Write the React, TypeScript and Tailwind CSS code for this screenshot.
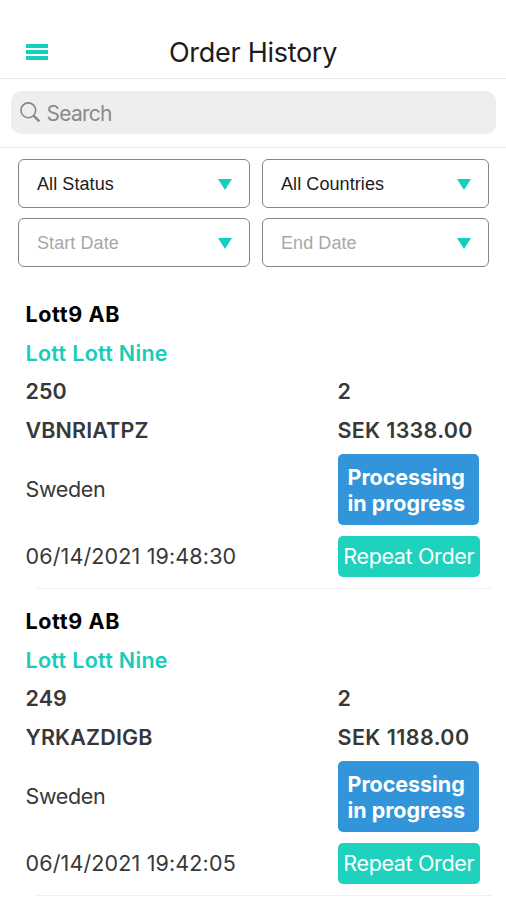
const orders = [
  { id: '250', code: 'VBNRIATPZ', price: 'SEK 1338.00', date: '06/14/2021 19:48:30', priceCls: 'tracking-[0.3px]' },
  { id: '249', code: 'YRKAZDIGB', price: 'SEK 1188.00', date: '06/14/2021 19:42:05', priceCls: 'tracking-[0.42px]' },
];

function Select({ label, muted }: { label: string; muted?: boolean }) {
  return (
    <button
      className={`flex h-[49px] items-center justify-between rounded-[6px] border border-[#858585] bg-white pr-[17px] pl-[18px] font-['Liberation_Sans',Arial,sans-serif] text-[18px] tracking-[0.08px] ${muted ? 'text-[#a8a8a8]' : 'text-[#1c1c1c]'}`}
    >
      <span className="pt-[2px]">{label}</span>
      <svg className="mt-[2px]" width="14" height="11" viewBox="0 0 14 11" fill="#14cfbd">
        <path d="M0 0H14L7 11Z" />
      </svg>
    </button>
  );
}

function Order({ order }: { order: (typeof orders)[number] }) {
  return (
    <section className="h-[307px] pt-[13px] pl-[25.5px] text-[21.5px] text-[#383838]">
      <div className="grid auto-rows-[38.6px] grid-cols-[312px_1fr] items-center font-semibold">
        <div className="col-span-2 font-bold tracking-[0.6px] text-black">Lott9 AB</div>
        <div className="col-span-2 tracking-[0.3px] text-[#17cdb9]">Lott Lott Nine</div>
        <div className="tracking-[0.1px]">{order.id}</div>
        <div>2</div>
        <div className="tracking-[0.12px]">{order.code}</div>
        <div className={order.priceCls}>{order.price}</div>
      </div>
      <div className="mt-[5px] grid grid-cols-[312px_1fr] items-center gap-y-[11px]">
        <div className="pb-[2px] tracking-[-0.35px]">Sweden</div>
        <div className="h-[71px] w-[141px] rounded-[5px] bg-[#3295d9] px-[10px] pt-[10px] leading-[26px] font-bold tracking-[-0.05px] whitespace-nowrap text-white">
          Processing
          <br />
          in progress
        </div>
        <div className="pb-[2px] tracking-[0.14px]">{order.date}</div>
        <button className="h-[41px] w-[142.5px] rounded-[5px] bg-[#1ed2bd] pb-[2px] text-center tracking-[-0.35px] whitespace-nowrap text-white">
          Repeat Order
        </button>
      </div>
      <div className="mt-[10.6px] mr-[14px] ml-[11px] h-px bg-[#efefef]" />
    </section>
  );
}

export default function App() {
  return (
    <main className="h-[900px] w-[506px] overflow-hidden bg-white font-['Inter',sans-serif]">
      <header className="grid h-[79px] grid-cols-[1fr_auto_1fr] items-end border-b border-[#e9e9e9] pb-[6px]">
        <button className="mb-[12px] ml-[26px] flex w-[22px] flex-col gap-[2px]" aria-label="Menu">
          <span className="h-[4px] w-full bg-[#14cfbd]" />
          <span className="h-[4px] w-full bg-[#14cfbd]" />
          <span className="h-[4px] w-full bg-[#14cfbd]" />
        </button>
        <h1 className="text-[27px] leading-[38px] tracking-[-0.28px] text-[#1c1c1c]">Order History</h1>
      </header>
      <div className="h-[69px] border-b border-[#e9e9e9] px-[10.5px] pt-[12px]">
        <div className="flex h-[43px] items-center gap-[6px] rounded-[10px] bg-[#eeeeee] pl-[9px] text-[#8a8a8a]">
          <svg width="21" height="21" viewBox="0 0 21 21" fill="none" stroke="#858585" strokeWidth="1.6">
            <circle cx="8.3" cy="8.3" r="7.4" />
            <path d="M13.6 13.6L19.4 19.4" strokeWidth="2.2" />
          </svg>
          <span className="pt-[2px] text-[21px] tracking-[-0.75px]">Search</span>
        </div>
      </div>
      <div className="grid grid-cols-[232px_227px] gap-x-[12px] gap-y-[10px] pt-[11px] pl-[18px]">
        <Select label="All Status" />
        <Select label="All Countries" />
        <Select label="Start Date" muted />
        <Select label="End Date" muted />
      </div>
      <div className="mt-[15px]">
        {orders.map((o) => (
          <Order key={o.id} order={o} />
        ))}
      </div>
    </main>
  );
}
